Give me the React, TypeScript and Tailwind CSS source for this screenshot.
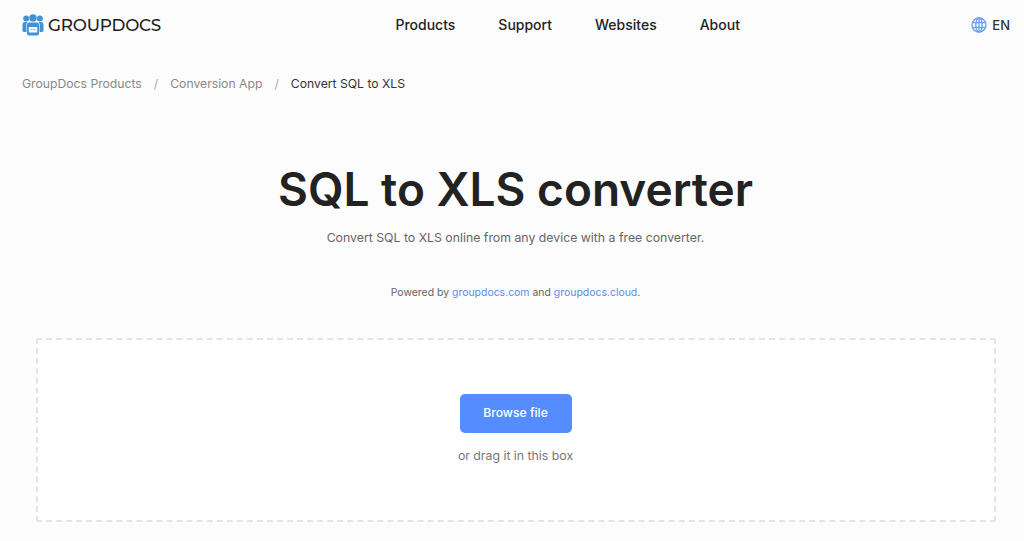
const sans = "font-['Inter','Liberation_Sans',sans-serif]";

function Logo() {
  return (
    <div className="flex items-center gap-[4px]">
      <svg width="22" height="22" viewBox="0 0 22 22">
        <circle cx="4.2" cy="4.6" r="3" fill="#3f93d8" />
        <circle cx="17.8" cy="4.6" r="3" fill="#3f93d8" />
        <path d="M0.5 10.5a2.5 2.5 0 0 1 2.5-2.5h16a2.5 2.5 0 0 1 2.5 2.5v6a1.5 1.5 0 0 1-1.5 1.5h-18a1.5 1.5 0 0 1-1.5-1.5z" fill="#3f93d8" />
        <circle cx="11" cy="4" r="4.2" fill="#fcfcfc" />
        <circle cx="11" cy="4" r="3.7" fill="#3f93d8" />
        <rect x="4.4" y="7.8" width="13.2" height="14" rx="2.4" fill="#fcfcfc" />
        <rect x="5" y="8.4" width="12" height="13.2" rx="2" fill="#3f93d8" />
        <rect x="6.8" y="13" width="8.4" height="5.4" rx="0.6" fill="#fff" />
        <rect x="8.2" y="15.2" width="5.6" height="1" fill="#8fbfe8" />
      </svg>
      <span className="font-['Montserrat','Lato','Liberation_Sans',sans-serif] text-[16.8px] font-medium leading-none text-[#1c1c1c] tracking-[-0.2px]">
        GROUPDOCS
      </span>
    </div>
  );
}

function Globe() {
  return (
    <svg width="16" height="16" viewBox="0 0 16 16" fill="none" stroke="#6b9cf8" strokeWidth="1.3">
      <circle cx="8" cy="8" r="7" />
      <ellipse cx="8" cy="8" rx="3.2" ry="7" />
      <path d="M8 1v14M1.3 5.6h13.4M1.3 10.4h13.4" />
    </svg>
  );
}

export default function App() {
  return (
    <div className={`${sans} h-[541px] w-[1024px] overflow-hidden bg-[#fcfcfc] text-[#222]`}>
      <header className="flex h-[50px] items-center justify-between pl-[22px] pr-[14px]">
        <Logo />
        <nav className="ml-[3px] flex gap-[43px] text-[14px] font-medium leading-none text-[#222]">
          <span>Products</span>
          <span>Support</span>
          <span>Websites</span>
          <span>About</span>
        </nav>
        <div className="flex items-center gap-[5px] text-[13px] font-medium leading-none text-[#333]">
          <Globe />
          <span>EN</span>
        </div>
      </header>
      <div className="mt-[25px] flex gap-[12px] pl-[22px] text-[12.2px] leading-[18px] text-[#888]">
        <span>GroupDocs Products</span>
        <span className="text-[#aaa]">/</span>
        <span>Conversion App</span>
        <span className="text-[#aaa]">/</span>
        <span className="text-[#333]">Convert SQL to XLS</span>
      </div>
      <main className="pl-[7px]">
        <h1 className="mt-[67px] text-center text-[46px] font-semibold leading-[58px] text-[#222]">
          SQL to XLS converter
        </h1>
        <p className="mt-[11px] text-center text-[12.3px] leading-[18px] text-[#666]">
          Convert SQL to XLS online from any device with a free converter.
        </p>
        <p className="mt-[39px] text-center text-[10.45px] leading-[14px] text-[#666]">
          Powered by <span className="text-[#5b8def]">groupdocs.com</span> and{" "}
          <span className="text-[#5b8def]">groupdocs.cloud</span>.
        </p>
        <div className="mx-auto mt-[38px] flex h-[184px] w-[960px] flex-col items-center rounded-[2px] border-2 border-dashed border-[#e4e4e4] bg-white pt-[54px]">
          <button className="h-[39px] w-[112px] rounded-[5px] bg-[#558cff] text-[12.2px] font-medium text-white">
            Browse file
          </button>
          <p className="mt-[14px] text-[12.3px] leading-[18px] text-[#777]">or drag it in this box</p>
        </div>
      </main>
    </div>
  );
}
